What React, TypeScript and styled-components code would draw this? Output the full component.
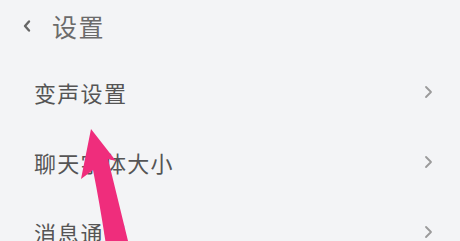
import React from 'react';
import styled, { createGlobalStyle } from 'styled-components';

const GlobalStyle = createGlobalStyle`
  html, body {
    margin: 0;
    padding: 0;
    background: #f3f4f6;
  }
  body {
    font-family: "Noto Sans CJK SC", "Noto Sans", sans-serif;
  }
`;

const Page = styled.div`
  position: relative;
  width: 460px;
  height: 241px;
  overflow: hidden;
  background: #f3f4f6;
`;

const Header = styled.div`
  display: flex;
  align-items: center;
  height: 52px;
  padding-left: 21px;
  gap: 19px;
`;

const Title = styled.div`
  font-size: 25px;
  color: #6b6b6b;
  letter-spacing: 1.5px;
`;

const List = styled.div`
  display: flex;
  flex-direction: column;
  padding-top: 5px;
`;

const Row = styled.div`
  display: flex;
  align-items: center;
  justify-content: space-between;
  height: 70px;
  padding: 0 27px 0 34px;
`;

const Label = styled.div`
  font-size: 22px;
  color: #555;
  letter-spacing: 1.3px;
`;

const Arrow = styled.svg`
  position: absolute;
  left: 0;
  top: 0;
  pointer-events: none;
`;

const Back = () => (
  <svg width="12" height="14" viewBox="0 0 12 14">
    <path d="M8 2.5 L4 7 L8 11.5" fill="none" stroke="#666" strokeWidth="2.4" strokeLinecap="round" strokeLinejoin="round" />
  </svg>
);

const Chevron = () => (
  <svg width="10" height="14" viewBox="0 0 10 14">
    <path d="M3 2 L8 7 L3 12" fill="none" stroke="#9a9a9a" strokeWidth="1.8" strokeLinecap="round" strokeLinejoin="round" />
  </svg>
);

const items = ['变声设置', '聊天字体大小', '消息通知'];

export default function App() {
  return (
    <Page>
      <GlobalStyle />
      <Header>
        <Back />
        <Title>设置</Title>
      </Header>
      <List>
        {items.map((t) => (
          <Row key={t}>
            <Label>{t}</Label>
            <Chevron />
          </Row>
        ))}
      </List>
      <Arrow width="460" height="241" viewBox="0 0 460 241">
        <path
          d="M91 129 L116 161 L108 159 Q118 200 129 245 L106 245 Q100 205 93 170 L81 179 Z"
          fill="#ef2d7c"
        />
      </Arrow>
    </Page>
  );
}
